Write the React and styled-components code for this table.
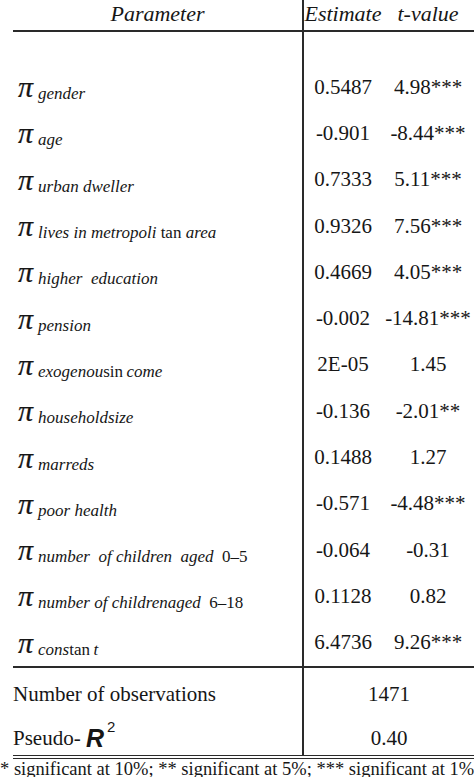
import React from 'react';
import styled, { createGlobalStyle } from 'styled-components';

const GlobalStyle = createGlobalStyle`
  html, body {
    margin: 0;
    padding: 0;
    background: #ffffff;
  }
`;

const serif = '"Liberation Serif", "Times New Roman", serif';

// rows of the table: label parts, estimate, t-value
// each label part is [text, upright?]
const rows = [
  { sub: [['gender']], est: '0.5487', t: '4.98***' },
  { sub: [['age']], est: '-0.901', t: '-8.44***' },
  { sub: [['urban dweller']], est: '0.7333', t: '5.11***' },
  { sub: [['lives in metropoli'], [' tan ', true], ['area']], est: '0.9326', t: '7.56***' },
  { sub: [['higher\u00a0 education']], est: '0.4669', t: '4.05***' },
  { sub: [['pension']], est: '-0.002', t: '-14.81***' },
  { sub: [['exogenou'], ['sin', true], ['\u2009come']], est: '2E-05', t: '1.45' },
  { sub: [['householdsize']], est: '-0.136', t: '-2.01**' },
  { sub: [['marreds']], est: '0.1488', t: '1.27' },
  { sub: [['poor health']], est: '-0.571', t: '-4.48***' },
  { sub: [['number\u00a0 of children\u00a0 aged\u00a0 '], ['0\u20135', true]], est: '-0.064', t: '-0.31' },
  { sub: [['number of childrenaged\u00a0 '], ['6\u201318', true]], est: '0.1128', t: '0.82' },
  { sub: [['cons'], ['tan', true], ['\u2009t']], est: '6.4736', t: '9.26***' },
];

const App = () => {
  return (
    <>
      <GlobalStyle />
      <Page>
        <Table>
          <HeaderRow>
            <HeadCell>Parameter</HeadCell>
            <HeadCell divider>Estimate</HeadCell>
            <HeadCell>t-value</HeadCell>
          </HeaderRow>
          <SpacerRow>
            <div />
            <Cell divider />
            <div />
          </SpacerRow>
          {rows.map((r, i) => (
            <ParamRow key={i}>
              <LabelCell>
                <Pi>π</Pi>
                <Sub>
                  {r.sub.map(([text, up], j) =>
                    up ? <Up key={j}>{text}</Up> : <span key={j}>{text}</span>
                  )}
                </Sub>
              </LabelCell>
              <Cell divider>{r.est}</Cell>
              <Cell>{r.t}</Cell>
            </ParamRow>
          ))}
          <StatsBlock>
            <StatRow>
              <StatLabel>Number of observations</StatLabel>
              <StatValue>1471</StatValue>
            </StatRow>
            <StatRow>
              <StatLabel>
                Pseudo-&nbsp;<BigR>R</BigR>
                <Sup>2</Sup>
              </StatLabel>
              <StatValue>0.40</StatValue>
            </StatRow>
          </StatsBlock>
        </Table>
        <Footnote>* significant at 10%; ** significant at 5%; *** significant at 1%</Footnote>
      </Page>
    </>
  );
};

export default App;

const Page = styled.div`
  width: 474px;
  height: 777px;
  overflow: hidden;
  background: #fff;
  font-family: ${serif};
  color: #161616;
`;

const Table = styled.div`
  margin-left: 13px;
  width: 461px;
`;

const HeaderRow = styled.div`
  display: grid;
  grid-template-columns: 289px 80px 1fr;
  height: 32px;
  box-sizing: border-box;
  border-bottom: 2px solid #2a2a2a;
`;

const HeadCell = styled.div`
  display: flex;
  align-items: center;
  justify-content: center;
  font-family: ${serif};
  font-style: italic;
  font-size: 22px;
  padding-bottom: 3px;
  border-left: ${(p) => (p.divider ? '2px solid #2a2a2a' : 'none')};
`;

const SpacerRow = styled.div`
  display: grid;
  grid-template-columns: 289px 80px 1fr;
  height: 32px;
`;

const ParamRow = styled.div`
  display: grid;
  grid-template-columns: 289px 80px 1fr;
  height: 46.3px;
`;

const Cell = styled.div`
  display: flex;
  align-items: center;
  justify-content: center;
  font-family: ${serif};
  font-size: 21px;
  white-space: nowrap;
  border-left: ${(p) => (p.divider ? '2px solid #2a2a2a' : 'none')};
`;

const LabelCell = styled.div`
  display: flex;
  align-items: center;
  padding-left: 5px;
  white-space: nowrap;
  font-family: ${serif};
`;

const Pi = styled.span`
  font-family: ${serif};
  font-style: italic;
  font-size: 30px;
  line-height: 1;
  -webkit-text-stroke: 0.2px #161616;
`;

const Sub = styled.span`
  font-family: ${serif};
  font-style: italic;
  font-size: 17px;
  margin-left: 5px;
  position: relative;
  top: 7px;
`;

const Up = styled.span`
  font-style: normal;
`;

const StatsBlock = styled.div`
  border-top: 2px solid #2a2a2a;
  border-bottom: 4px double #2a2a2a;
`;

const StatRow = styled.div`
  display: grid;
  grid-template-columns: 289px 1fr;
  height: 43.5px;
`;

const StatLabel = styled.div`
  display: flex;
  align-items: center;
  padding-top: 10px;
  font-family: ${serif};
  font-size: 21px;
  white-space: nowrap;
`;

const StatValue = styled.div`
  display: flex;
  align-items: center;
  justify-content: center;
  padding-top: 10px;
  font-family: ${serif};
  font-size: 21px;
  border-left: 2px solid #2a2a2a;
`;

const BigR = styled.span`
  font-family: "Liberation Sans", Arial, sans-serif;
  font-style: italic;
  font-weight: bold;
  font-size: 25px;
`;

const Sup = styled.span`
  font-family: "Liberation Sans", Arial, sans-serif;
  font-size: 15px;
  position: relative;
  top: -12px;
  margin-left: 3px;
`;

const Footnote = styled.div`
  font-family: ${serif};
  font-size: 18.5px;
  white-space: nowrap;
  margin-top: 0;
  line-height: 20px;
`;
